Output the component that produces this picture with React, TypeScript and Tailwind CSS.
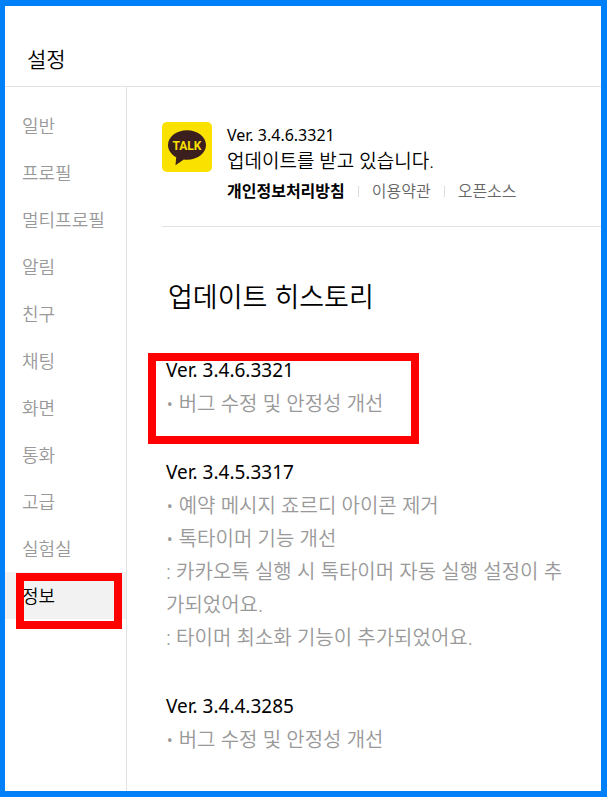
const MENU = ['일반', '프로필', '멀티프로필', '알림', '친구', '채팅', '화면', '통화', '고급', '실험실', '정보'];

type Release = {
  version: string;
  notes: string[];
  marked?: boolean;
};

const RELEASES: Release[] = [
  { version: '3.4.6.3321', notes: ['• 버그 수정 및 안정성 개선'], marked: true },
  {
    version: '3.4.5.3317',
    notes: [
      '• 예약 메시지 죠르디 아이콘 제거',
      '• 톡타이머 기능 개선',
      ': 카카오톡 실행 시 톡타이머 자동 실행 설정이 추가되었어요.',
      ': 타이머 최소화 기능이 추가되었어요.',
    ],
  },
  { version: '3.4.4.3285', notes: ['• 버그 수정 및 안정성 개선'] },
];

const TalkLogo = () => (
  <svg viewBox="0 0 50 50" className="size-[50px] shrink-0" role="img" aria-label="TALK">
    <rect width="50" height="50" rx="5" fill="#fae100" />
    <path
      d="M25 8.200C14.500 8.200 6 14.800 6 23c0 5.300 3.400 9.600 8.200 12.200L13.500 43.300l8.300-5.800c1 .1 2.100.2 3.200.2 10.500 0 19-6.500 19-14.700S35.500 8.200 25 8.200z"
      fill="#3b1e1e"
    />
    <text
      x="25"
      y="28"
      textAnchor="middle"
      fontSize="12"
      fontWeight="700"
      fill="#fae100"
      fontFamily="Roboto, sans-serif"
    >
      TALK
    </text>
  </svg>
);

const Sidebar = () => (
  <nav className="w-[122px] shrink-0 border-r border-[#e3e3e3] pt-[15px]">
    <ul>
      {MENU.map((label) => {
        const active = label === '정보';
        return (
          <li key={label} className="relative">
            <button
              type="button"
              aria-current={active ? 'page' : undefined}
              className={`h-[47px] w-full pl-[17px] text-left text-lg whitespace-nowrap ${
                active ? 'bg-[#f2f2f2] text-black' : 'text-[#999999]'
              }`}
            >
              {label}
            </button>
            {active && (
              <span className="pointer-events-none absolute top-px left-[11px] h-14 w-[106px] border-8 border-[#ff0000]" />
            )}
          </li>
        );
      })}
    </ul>
  </nav>
);

const AppInfo = () => (
  <section className="flex gap-[15px] border-b border-[#e3e3e3] pt-[35px] pb-[23px]">
    <TalkLogo />
    <div>
      <p className="text-base leading-[26px] font-normal">Ver. 3.4.6.3321</p>
      <p className="text-[19px] leading-[26px]">업데이트를 받고 있습니다.</p>
      <div className="mt-[5px] flex items-center text-base leading-6 text-[#666666]">
        <a href="#privacy" className="font-bold text-black">개인정보처리방침</a>
        <span className="mx-[13px] h-[11px] w-px bg-[#dddddd]" />
        <a href="#terms">이용약관</a>
        <span className="mx-[13px] h-[11px] w-px bg-[#dddddd]" />
        <a href="#opensource">오픈소스</a>
      </div>
    </div>
  </section>
);

const History = () => (
  <section className="pt-[50px] pr-[30px] pl-1">
    <h2 className="pl-0.5 text-[27px] leading-10">업데이트 히스토리</h2>
    <div className="mt-9 flex flex-col gap-[35px]">
      {RELEASES.map(({ version, notes, marked }) => (
        <article key={version} className="relative">
          <h3 className="text-[19px] leading-[34px] font-normal">Ver. {version}</h3>
          {notes.map((note) => (
            <p key={note} className="text-xl leading-[33px] text-[#999999]">{note}</p>
          ))}
          {marked && (
            <span className="pointer-events-none absolute top-0 -left-[18px] h-[91px] w-[271px] border-8 border-[#ff0000]" />
          )}
        </article>
      ))}
    </div>
  </section>
);

const App = () => {
  return (
    <div className="flex min-h-screen flex-col border-6 border-l-5 border-[#0080f8] bg-white font-['Noto_Sans','Noto_Sans_CJK_KR',sans-serif] font-[350] text-black [&_h1]:font-[350] [&_h2]:font-[350]">
      <header className="border-b border-[#e3e3e3] px-[22px] pt-9 pb-[10px]">
        <h1 className="text-[21px] leading-[34px]">설정</h1>
      </header>
      <div className="flex flex-1">
        <Sidebar />
        <main className="min-w-0 flex-1 pl-[35px]">
          <AppInfo />
          <History />
        </main>
      </div>
    </div>
  );
};

export default App;
